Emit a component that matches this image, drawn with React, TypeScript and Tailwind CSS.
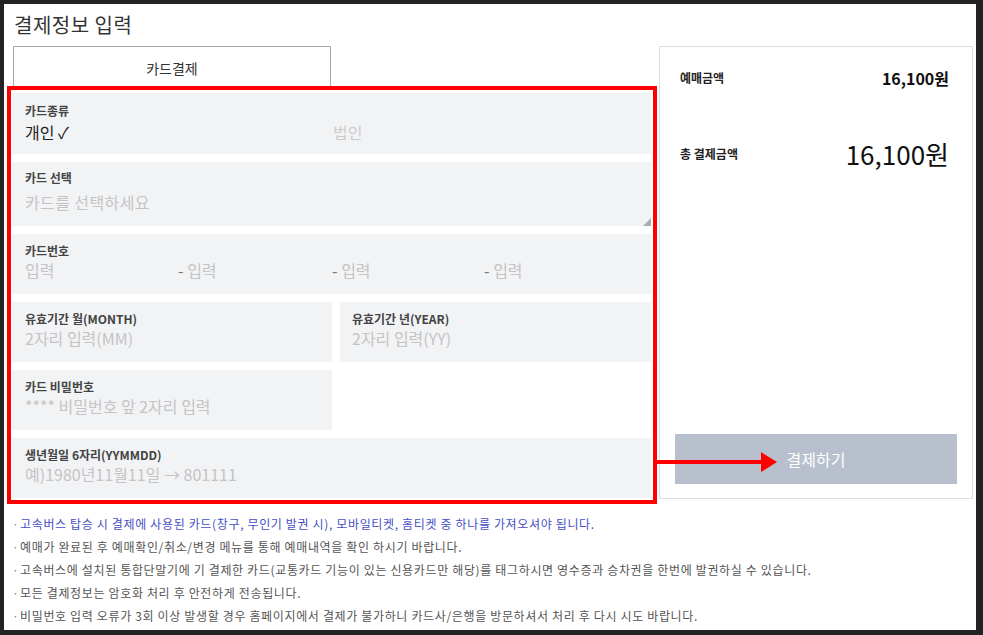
import React from "react";

const font = { fontFamily: '"Noto Sans CJK KR", "Noto Sans", sans-serif' };

function Label({ children }: { children: React.ReactNode }) {
  return <div className="text-[12px] leading-[18px] font-bold text-[#444]">{children}</div>;
}

function Ph({ children, className = "" }: { children: React.ReactNode; className?: string }) {
  return <div className={`text-[16px] leading-[20px] text-[#c4c4c4] ${className}`}>{children}</div>;
}

export default function App() {
  const notes = [
    "고속버스 탑승 시 결제에 사용된 카드(창구, 무인기 발권 시), 모바일티켓, 홈티켓 중 하나를 가져오셔야 됩니다.",
    "예매가 완료된 후 예매확인/취소/변경 메뉴를 통해 예매내역을 확인 하시기 바랍니다.",
    "고속버스에 설치된 통합단말기에 기 결제한 카드(교통카드 기능이 있는 신용카드만 해당)를 태그하시면 영수증과 승차권을 한번에 발권하실 수 있습니다.",
    "모든 결제정보는 암호화 처리 후 안전하게 전송됩니다.",
    "비밀번호 입력 오류가 3회 이상 발생할 경우 홈페이지에서 결제가 불가하니 카드사/은행을 방문하셔서 처리 후 다시 시도 바랍니다.",
  ];
  return (
    <div className="w-[983px] h-[635px] bg-[#232323] pl-[4px] pt-[4px] pr-[7px] pb-[5px]" style={font}>
      <div className="relative w-full h-full bg-white flex flex-col">
        <div className="h-[42px] pl-[10px] flex items-center text-[20px] tracking-[0.5px] text-[#333] leading-[28px]">결제정보 입력</div>
        <div className="flex pl-[3px] gap-[2px]">
          <div className="w-[650px] flex flex-col">
            <div className="ml-[6px] w-[318px] h-[40px] border-t border-l border-r border-[#a8a8a8] flex items-center justify-center pt-[4px] text-[14px] text-[#333]">
              카드결제
            </div>
            <div className="border-4 border-[#ff0000] pt-[3px] pb-[2px] pl-[1px] pr-[2px] flex flex-col gap-[8px]">
              <div className="h-[61px] bg-[#f2f3f5] pl-[13px] pt-[9px]">
                <Label>카드종류</Label>
                <div className="flex mt-[2px] text-[16px] leading-[20px]">
                  <div className="w-[308px] text-[#222]">개인 ✓</div>
                  <div className="text-[#cccccc]">법인</div>
                </div>
              </div>
              <div className="relative h-[64px] bg-[#f2f3f5] pl-[13px] pt-[7px]">
                <Label>카드 선택</Label>
                <Ph className="mt-[5px] tracking-[0.4px]">카드를 선택하세요</Ph>
                <svg className="absolute right-0 bottom-0" width="8" height="8" viewBox="0 0 8 8">
                  <polygon points="8,0 8,8 0,8" fill="#a9adb5" />
                </svg>
              </div>
              <div className="h-[60px] bg-[#f2f3f5] pl-[13px] pt-[8px]">
                <Label>카드번호</Label>
                <div className="flex">
                  <Ph className="w-[153px]">입력</Ph>
                  <Ph className="w-[154px]"><span className="text-[#777]">-</span> 입력</Ph>
                  <Ph className="w-[152px]"><span className="text-[#777]">-</span> 입력</Ph>
                  <Ph><span className="text-[#777]">-</span> 입력</Ph>
                </div>
              </div>
              <div className="flex gap-[8px]">
                <div className="w-[320px] h-[60px] bg-[#f2f3f5] pl-[13px] pt-[8px]">
                  <Label>유효기간 월(MONTH)</Label>
                  <Ph>2자리 입력(MM)</Ph>
                </div>
                <div className="flex-1 h-[60px] bg-[#f2f3f5] pl-[12px] pt-[8px]">
                  <Label>유효기간 년(YEAR)</Label>
                  <Ph>2자리 입력(YY)</Ph>
                </div>
              </div>
              <div className="w-[320px] h-[60px] bg-[#f2f3f5] pl-[13px] pt-[8px]">
                <Label>카드 비밀번호</Label>
                <Ph>**** 비밀번호 앞 2자리 입력</Ph>
              </div>
              <div className="h-[60px] bg-[#f2f3f5] pl-[13px] pt-[8px]">
                <Label>생년월일 6자리(YYMMDD)</Label>
                <Ph>예)1980년11월11일 → 801111</Ph>
              </div>
            </div>
          </div>
          <div className="w-[314px] h-[453px] border border-[#dddddd] flex flex-col px-[15px] pb-[14px]">
            <div className="flex items-center justify-between pl-[5px] pr-[8px] pt-[19px] h-[42px]">
              <div className="text-[12px] font-bold text-[#222]">예매금액</div>
              <div className="text-[16px] font-bold text-[#111]">16,100원</div>
            </div>
            <div className="flex items-center justify-between pl-[5px] pr-[8px] mt-[45px] h-[40px]">
              <div className="text-[12px] font-bold text-[#222]">총 결제금액</div>
              <div className="text-[26px] text-[#111] leading-[34px]">16,100원</div>
            </div>
            <div className="mt-auto h-[50px] bg-[#b8bfcd] flex items-center justify-center text-[16px] text-white">
              결제하기
            </div>
          </div>
        </div>
        <div className="mt-[8px] pl-[8px] flex flex-col">
          {notes.map((n, i) => (
            <div
              key={i}
              className={`text-[12px] leading-[23px] tracking-[0.65px] ${i === 0 ? "text-[#4650c4]" : "text-[#555]"}`}
            >
              <span className="inline-block w-[8px] text-[#888] tracking-normal">·</span>
              {n}
            </div>
          ))}
        </div>
        <svg className="absolute left-[653px] top-[447px]" width="120" height="22" viewBox="0 0 120 22">
          <rect x="0" y="9" width="106" height="4" fill="#ff0000" />
          <polygon points="104,1 120,11 104,21" fill="#ff0000" />
        </svg>
      </div>
    </div>
  );
}
